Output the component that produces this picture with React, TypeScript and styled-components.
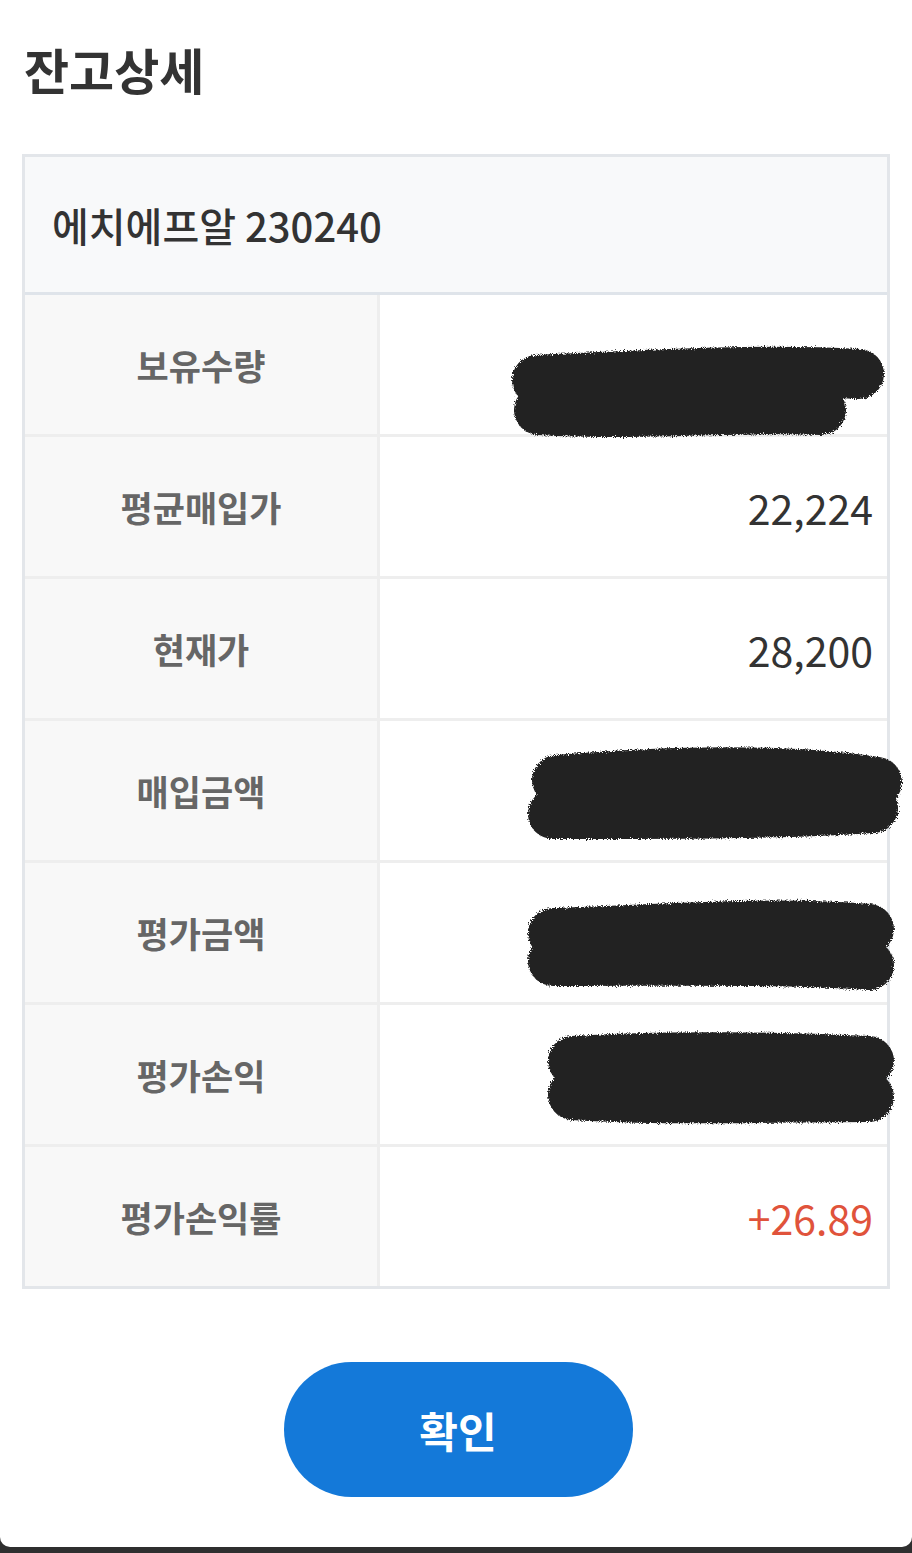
import styled, { createGlobalStyle } from "styled-components";

type Scribble = {
  left: number;
  top: number;
  width: number;
  height: number;
  strokes: string[];
};

type Item = {
  label: string;
  value?: string;
  tone?: "plain" | "up";
  scribble?: Scribble;
};

const items: Item[] = [
  {
    label: "보유수량",
    scribble: {
      left: 129,
      top: 53,
      width: 380,
      height: 92,
      strokes: ["M28 32 C120 28 240 20 350 26", "M30 62 C140 68 240 58 312 62"],
    },
  },
  { label: "평균매입가", value: "22,224" },
  { label: "현재가", value: "28,200" },
  {
    label: "매입금액",
    scribble: {
      left: 145,
      top: 27,
      width: 380,
      height: 96,
      strokes: ["M32 32 C150 22 260 20 352 34", "M28 66 C150 66 260 66 348 60"],
    },
  },
  {
    label: "평가금액",
    scribble: {
      left: 145,
      top: 42,
      width: 372,
      height: 88,
      strokes: ["M28 28 C140 24 250 16 344 24", "M28 56 C150 56 260 54 344 60"],
    },
  },
  {
    label: "평가손익",
    scribble: {
      left: 165,
      top: 28,
      width: 352,
      height: 92,
      strokes: ["M28 28 C120 22 240 24 324 28", "M28 62 C120 68 240 64 324 64"],
    },
  },
  { label: "평가손익률", value: "+26.89", tone: "up" },
];

const Redaction = ({ s, id }: { s: Scribble; id: string }) => (
  <ScribbleBox $left={s.left} $top={s.top} width={s.width} height={s.height} viewBox={`0 0 ${s.width} ${s.height}`}>
    <defs>
      <filter id={id} filterUnits="userSpaceOnUse" x={-10} y={-10} width={s.width + 20} height={s.height + 20}>
        <feTurbulence type="fractalNoise" baseFrequency="0.9" numOctaves="2" result="n" />
        <feDisplacementMap in="SourceGraphic" in2="n" scale="6" />
      </filter>
    </defs>
    <g filter={`url(#${id})`} stroke="#222" strokeWidth={50} strokeLinecap="round" fill="none">
      {s.strokes.map((d) => (
        <path key={d} d={d} />
      ))}
    </g>
  </ScribbleBox>
);

const BalanceDetail = () => {
  return (
    <Sheet>
      <Title>잔고상세</Title>

      <Table>
        <Header>에치에프알 230240</Header>
        {items.map((it, i) => (
          <Row key={it.label}>
            <Label>{it.label}</Label>
            <Value $tone={it.tone ?? "plain"}>
              {it.value}
              {it.scribble && <Redaction s={it.scribble} id={`rough-${i}`} />}
            </Value>
          </Row>
        ))}
      </Table>

      <Footer>
        <ConfirmButton>확인</ConfirmButton>
      </Footer>
    </Sheet>
  );
};

export default function App() {
  return (
    <>
      <GlobalStyle />
      <BalanceDetail />
    </>
  );
}

const GlobalStyle = createGlobalStyle`
  html, body {
    margin: 0;
    padding: 0;
    background: #2f2f2f;
    font-family: "Noto Sans CJK KR", "Noto Sans", sans-serif;
  }
`;

const Sheet = styled.div`
  width: 912px;
  height: 1547px;
  box-sizing: border-box;
  padding: 40px 22px 0;
  background: #ffffff;
  border-radius: 0 0 10px 10px;
  overflow: hidden;
`;

const Title = styled.h1`
  margin: 0 0 54px 2px;
  height: 60px;
  line-height: 58px;
  font-size: 49px;
  font-weight: 700;
  color: #333333;
`;

const Table = styled.div`
  border: 3px solid #e3e6ea;
  background: #ffffff;
`;

const Header = styled.div`
  height: 135px;
  display: flex;
  align-items: center;
  padding-left: 27px;
  background: #f8f9fa;
  border-bottom: 3px solid #dfe4ea;
  font-size: 40px;
  font-weight: 500;
  color: #333333;
`;

const Row = styled.div`
  display: grid;
  grid-template-columns: 355px 1fr;
  height: 142px;
  box-sizing: border-box;
  border-bottom: 3px solid #eeeeee;
  &:last-child {
    border-bottom: none;
    height: 139px;
  }
`;

const Label = styled.div`
  display: flex;
  align-items: center;
  justify-content: center;
  background: #f8f8f8;
  border-right: 3px solid #eeeeee;
  font-size: 35px;
  font-weight: 700;
  color: #666666;
`;

const Value = styled.div<{ $tone: "plain" | "up" }>`
  position: relative;
  display: flex;
  align-items: center;
  justify-content: flex-end;
  padding-right: 14px;
  font-size: 41px;
  font-weight: 400;
  color: ${(p) => (p.$tone === "up" ? "#e0533b" : "#333333")};
`;

const ScribbleBox = styled.svg<{ $left: number; $top: number }>`
  position: absolute;
  left: ${(p) => p.$left}px;
  top: ${(p) => p.$top}px;
  overflow: visible;
  z-index: 1;
`;

const Footer = styled.div`
  display: flex;
  justify-content: center;
  padding-top: 73px;
  padding-left: 4px;
`;

const ConfirmButton = styled.button`
  width: 349px;
  height: 135px;
  border: none;
  border-radius: 68px;
  background: #1479d9;
  color: #ffffff;
  font-family: "Noto Sans CJK KR", "Noto Sans", sans-serif;
  font-size: 42px;
  font-weight: 700;
  cursor: pointer;
`;
